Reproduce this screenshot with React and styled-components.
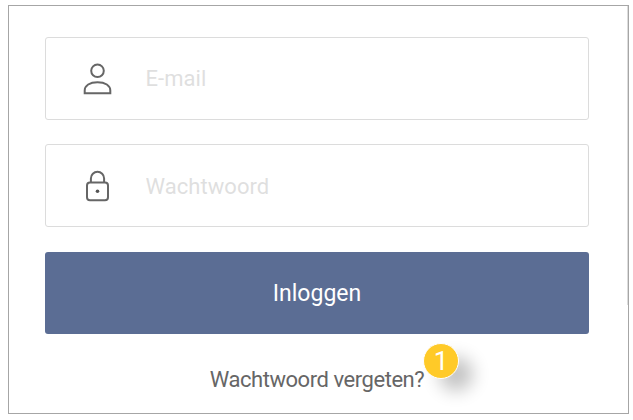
import styled, { createGlobalStyle } from "styled-components";

const App = () => {
  return (
    <>
      <GlobalStyle />
      <Card>
        <Form onSubmit={(e) => e.preventDefault()}>
          <Field>
            <UserIcon />
            <Input type="email" placeholder="E-mail" />
          </Field>
          <Field>
            <LockIcon />
            <Input type="password" placeholder="Wachtwoord" $drop="1px" />
          </Field>
          <LoginButton type="submit">Inloggen</LoginButton>
        </Form>
        <Footer>
          <ForgotLink href="#">Wachtwoord vergeten?</ForgotLink>
          <Step>1</Step>
        </Footer>
      </Card>
    </>
  );
};

const UserIcon = () => (
  <Icon viewBox="0 0 32 36">
    <circle cx="15.5" cy="9.8" r="6.3" />
    <path d="M2.7 32.2v-2.6c0-5 5-8.4 12.8-8.4s12.8 3.4 12.8 8.4v2.6z" />
  </Icon>
);

const LockIcon = () => (
  <Icon viewBox="0 0 32 36">
    <path d="M8.9 14.4v-4a6.6 6.6 0 0 1 13.2 0v4" />
    <rect x="5" y="14.4" width="21" height="17.8" rx="3" />
    <Keyhole cx="15.5" cy="23.2" r="1.8" />
  </Icon>
);

const GlobalStyle = createGlobalStyle`
  * {
    box-sizing: border-box;
  }
  body {
    margin: 0;
    background: #fff;
    font-family: Roboto, "Liberation Sans", sans-serif;
  }
`;

const Card = styled.div`
  position: relative;
  width: 621px;
  height: 409px;
  margin: 5px 0 0 8px;
  padding: 31px 39px 0 36px;
  border: 1px solid #a6a6a6;

  /* short scroll track along the right edge */
  &::after {
    content: "";
    position: absolute;
    top: 0;
    right: 0;
    width: 1px;
    height: 299px;
    background: #dcdcdc;
  }
`;

const Form = styled.form`
  display: flex;
  flex-direction: column;
`;

const Field = styled.label`
  display: flex;
  align-items: center;
  height: 83px;
  margin-bottom: 24px;
  padding-left: 36px;
  border: 1px solid #dcdcdc;
  border-radius: 3px;
`;

const Icon = styled.svg`
  width: 32px;
  height: 36px;
  flex: none;
  overflow: visible;
  fill: none;
  stroke: #666;
  stroke-width: 2;
`;

const Keyhole = styled.circle`
  fill: #555;
  stroke: none;
`;

const Input = styled.input`
  flex: 1;
  min-width: 0;
  margin-left: 31.5px;
  padding: ${({ $drop }) => $drop || 0} 0 0;
  border: none;
  outline: none;
  background: transparent;
  color: #666;
  font-family: inherit;
  font-size: 22px;
  letter-spacing: 0.05px;

  &::placeholder {
    color: #dfdfdf;
    opacity: 1;
  }
`;

const LoginButton = styled.button`
  height: 82px;
  margin-top: 1px;
  padding: 0;
  border: none;
  border-radius: 3px;
  background: #5b6d94;
  color: #fff;
  font-family: inherit;
  font-size: 23px;
  cursor: pointer;
`;

const Footer = styled.div`
  position: relative;
  display: flex;
  justify-content: center;
  padding-top: 33px;
`;

const ForgotLink = styled.a`
  color: #666;
  font-size: 22px;
  line-height: 26px;
  letter-spacing: -0.45px;
  text-decoration: none;
`;

const Step = styled.span`
  position: absolute;
  top: 8.5px;
  left: 378px;
  width: 36px;
  height: 36px;
  border: 1px solid #fff;
  border-radius: 50%;
  background: #ffca28;
  box-shadow: 15px 13px 17px -1px rgba(0, 0, 0, 0.24);
  color: #fff;
  font-size: 26px;
  line-height: 34px;
  text-align: center;
`;

export default App;
